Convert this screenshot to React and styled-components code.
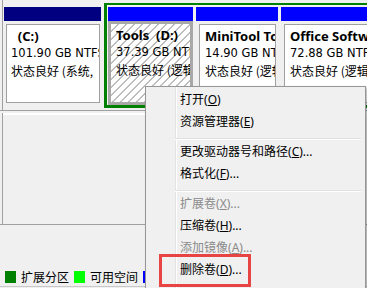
import React from 'react';
import styled, { createGlobalStyle } from 'styled-components';

const Global = createGlobalStyle`
  html, body { margin: 0; padding: 0; background: #f0f0f0; }
  * { box-sizing: border-box; }
`;

const FONT = `"Noto Sans", "Noto Sans CJK SC", sans-serif`;

const Screen = styled.div`
  position: relative;
  width: 367px;
  height: 288px;
  overflow: hidden;
  background: #f0f0f0;
  font-family: ${FONT};
  color: #000;
`;

const DiskSection = styled.div`
  margin-left: 2px;
  border-left: 1px solid #a0a0a0;
  height: ${p => p.$h}px;
  padding-top: ${p => p.$pt || 0}px;
`;

const HLine = styled.div`
  height: 1px;
  background: ${p => p.$c || '#a0a0a0'};
`;

const WhiteStrip = styled.div`
  margin-top: 2px;
  height: 2px;
  background: #fff;
`;

const DiskRow = styled.div`
  display: flex;
  height: 105px;
  white-space: nowrap;
`;

const Cell = styled.div`
  flex: 0 0 ${p => p.$w}px;
  width: ${p => p.$w}px;
  display: flex;
  flex-direction: column;
  padding: ${p => p.$pad || '0 2px 0 1px'};
`;

const Header = styled.div`
  height: 14px;
  flex: 0 0 14px;
  background: ${p => p.$c};
`;

const Body = styled.div`
  flex: 1;
  display: flex;
  padding: ${p => p.$pad || '3px 2px 2px 3px'};
`;

const Box = styled.div`
  flex: 1;
  min-width: 0;
  overflow: hidden;
  padding: 3px 0 0 ${p => p.$pl || 5}px;
  border: ${p => (p.$selected ? '3px solid #a8a8a8' : '1px solid #a0a0a0')};
  background: ${p =>
    p.$selected
      ? 'repeating-linear-gradient(135deg, #ffffff 0 4.8px, #bcbcbc 4.8px 5.66px)'
      : '#ffffff'};
`;

const Label = styled.div`
  font-weight: 700;
  font-size: 13px;
  line-height: 17px;
  white-space: pre;
`;

const Line = styled.div`
  font-family: "DejaVu Sans", sans-serif;
  font-size: 11.5px;
  line-height: 17px;
  white-space: pre;
`;

const Status = styled.div`
  font-family: "Noto Sans CJK SC", sans-serif;
  font-size: 12px;
  line-height: 17px;
  white-space: pre;
`;

const Extended = styled.div`
  display: flex;
  flex: 0 0 auto;
  border-top: 2px solid #008000;
  border-left: 3px solid #008000;
  border-bottom: 3px solid #008000;
  padding-top: 2px;
`;

const Lower = styled.div`
  height: 61px;
  padding-top: 45px;
`;

const Legend = styled.div`
  display: flex;
  align-items: center;
  padding-left: 5px;
  height: 14px;
`;

const Swatch = styled.span`
  display: inline-block;
  flex: 0 0 11px;
  width: 11px;
  height: 12px;
  background: ${p => p.$c};
  margin-right: 5px;
`;

const LegendText = styled.span`
  font-size: 12px;
  line-height: 14px;
  margin-right: 5px;
  font-family: "Noto Sans CJK SC", sans-serif;
  white-space: nowrap;
`;

const Menu = styled.div`
  position: absolute;
  left: 145px;
  top: 86px;
  width: 221px;
  height: 215px;
  background: #f0f0f0;
  border: 1px solid #979797;
  box-shadow: 2px 2px 3px rgba(0, 0, 0, 0.3);
  padding: 2px;
  &::before {
    content: '';
    position: absolute;
    top: 0;
    bottom: 0;
    left: 29px;
    width: 1px;
    background: #e2e3e3;
  }
  &::after {
    content: '';
    position: absolute;
    top: 0;
    bottom: 0;
    left: 30px;
    width: 1px;
    background: #ffffff;
  }
`;

const Item = styled.div`
  position: relative;
  z-index: 1;
  height: 22px;
  line-height: 22px;
  padding-left: 32px;
  font-size: 12px;
  color: ${p => (p.$disabled ? '#8a8a8a' : '#000')};
  white-space: nowrap;
  u { text-underline-offset: 1px; }
`;

const Separator = styled.div`
  position: relative;
  z-index: 1;
  margin: 5px 2px 1px 27px;
  height: 2px;
  border-top: 1px solid #e0e0e0;
  border-bottom: 1px solid #ffffff;
`;

const Highlight = styled.div`
  position: absolute;
  left: 159px;
  top: 254px;
  width: 92px;
  height: 33px;
  border: 3px solid #e84444;
  z-index: 2;
`;

const Partition = ({ w, color, selected, label, size, status, pad, bodyPad, pl }) => (
  <Cell $w={w} $pad={pad}>
    <Header $c={color} />
    <Body $pad={bodyPad}>
      <Box $selected={selected} $pl={pl}>
        <Label>{label}</Label>
        <Line>{size}</Line>
        <Status>{status}</Status>
      </Box>
    </Body>
  </Cell>
);

const items = [
  { t: '打开', k: 'O' },
  { t: '资源管理器', k: 'E' },
  { sep: true },
  { t: '更改驱动器号和路径', k: 'C', dots: true },
  { t: '格式化', k: 'F', dots: true },
  { sep: true },
  { t: '扩展卷', k: 'X', dots: true, disabled: true },
  { t: '压缩卷', k: 'H', dots: true },
  { t: '添加镜像', k: 'A', dots: true, disabled: true },
  { t: '删除卷', k: 'D', dots: true },
];

export default function App() {
  return (
    <>
      <Global />
      <Screen>
        <DiskSection $h={110} $pt={3}>
          <DiskRow>
            <Partition
              w={101}
              pad="4px 3px 0 1px"
              bodyPad="3px 1px 5px 2px"
              pl={4}
              color="#000080"
              label={'\u00a0\u00a0(C:)'}
              size="101.90 GB NTFS"
              status="状态良好 (系统,  启动, 页面文件, 活动, 故障转储, 主分区)"
            />
            <Extended>
              <Partition
                w={88}
                color="#0000ff"
                selected
                bodyPad="0 0 0 0"
                label={'Tools\u00a0\u00a0(D:)'}
                size="37.39 GB NTFS"
                status="状态良好 (逻辑驱动器)"
              />
              <Partition
                w={85}
                color="#0000ff"
                label="MiniTool Tools (E:)"
                size="14.90 GB NTFS"
                status="状态良好 (逻辑驱动器)"
              />
              <Partition
                w={100}
                color="#0000ff"
                label="Office Software (F:)"
                size="72.88 GB NTFS"
                status="状态良好 (逻辑驱动器)"
              />
            </Extended>
          </DiskRow>
        </DiskSection>
        <HLine />
        <DiskSection $h={111}>
          <WhiteStrip />
        </DiskSection>
        <HLine />
        <Lower>
          <Legend>
            <Swatch $c="#008000" />
            <LegendText>扩展分区</LegendText>
            <Swatch $c="#00ff00" />
            <LegendText>可用空间</LegendText>
            <Swatch $c="#0000ff" />
            <LegendText>逻辑驱动器</LegendText>
          </Legend>
        </Lower>
        <HLine $c="#c8c8c8" />

        <Menu>
          {items.map((it, i) =>
            it.sep ? (
              <Separator key={i} />
            ) : (
              <Item key={i} $disabled={it.disabled}>
                {it.t}(<u>{it.k}</u>){it.dots ? '...' : ''}
              </Item>
            )
          )}
        </Menu>
        <Highlight />
      </Screen>
    </>
  );
}
